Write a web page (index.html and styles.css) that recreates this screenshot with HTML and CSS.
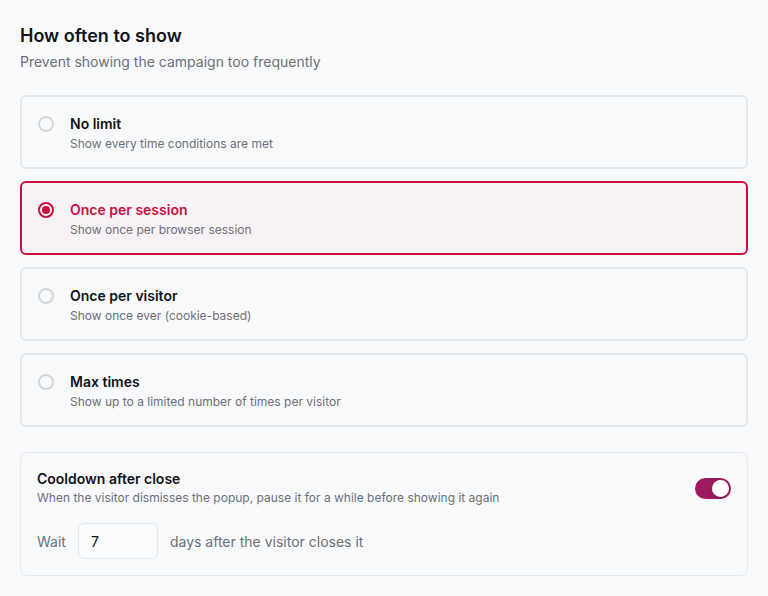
FILE: index.html
```html
<!DOCTYPE html>
<html>
<head>
	<meta charset="utf-8">
	<title>How often to show</title>
	<link rel="stylesheet" href="styles.css">
</head>
<body>
	<div class="panel">
		<h2 class="title">How often to show</h2>
		<p class="subtitle">Prevent showing the campaign too frequently</p>

		<div class="options">
			<label class="option">
				<span class="radio"></span>
				<span class="text">
					<span class="name">No limit</span>
					<span class="desc">Show every time conditions are met</span>
				</span>
			</label>
			<label class="option selected">
				<span class="radio"></span>
				<span class="text">
					<span class="name">Once per session</span>
					<span class="desc">Show once per browser session</span>
				</span>
			</label>
			<label class="option">
				<span class="radio"></span>
				<span class="text">
					<span class="name">Once per visitor</span>
					<span class="desc">Show once ever (cookie-based)</span>
				</span>
			</label>
			<label class="option">
				<span class="radio"></span>
				<span class="text">
					<span class="name">Max times</span>
					<span class="desc">Show up to a limited number of times per visitor</span>
				</span>
			</label>
		</div>

		<div class="cooldown">
			<div class="cooldown-head">
				<div>
					<div class="name">Cooldown after close</div>
					<div class="desc">When the visitor dismisses the popup, pause it for a while before showing it again</div>
				</div>
				<span class="toggle on"><span class="knob"></span></span>
			</div>
			<div class="wait">
				<span>Wait</span>
				<input type="text" value="7">
				<span>days after the visitor closes it</span>
			</div>
		</div>
	</div>
</body>
</html>
```

FILE: styles.css
```css
html, body{
	margin:0;
	background:#f8f9fb;
}
body{
	font-family:Inter, "Liberation Sans", sans-serif;
	color:#111318;
}
.panel{
	padding:24px 20px 20px;
}
.title{
	margin:0;
	font-size:18px;
	font-weight:600;
	line-height:24px;
}
.subtitle{
	margin:5px 0 0;
	font-size:14px;
	line-height:18px;
	color:#6b7079;
}
.options{
	margin-top:24px;
	display:flex;
	flex-direction:column;
	gap:12px;
}
.option{
	display:flex;
	align-items:flex-start;
	gap:16px;
	height:74px;
	box-sizing:border-box;
	padding:17px 16px 0 16px;
	border:2px solid #e3e8ef;
	border-radius:6px;
	background:#f8f9fb;
	cursor:pointer;
}
.radio{
	width:16px;
	height:16px;
	box-sizing:border-box;
	margin-top:2px;
	border:2px solid #cfd8e3;
	border-radius:50%;
	flex:none;
	position:relative;
}
.text{
	display:flex;
	flex-direction:column;
}
.name{
	font-size:14px;
	font-weight:600;
	line-height:20px;
	color:#111318;
}
.desc{
	font-size:12px;
	line-height:18px;
	color:#6b7079;
	margin-top:1px;
}
.selected{
	border-color:#c8113f;
	background:#f8f2f6;
}
.selected .radio{
	border-color:#c8113f;
}
.selected .radio::after{
	content:"";
	position:absolute;
	left:2px;
	top:2px;
	width:8px;
	height:8px;
	border-radius:50%;
	background:#c8113f;
}
.selected .name{
	color:#c8113f;
}
.cooldown{
	margin-top:25px;
	border:1px solid #e3e8ef;
	border-radius:8px;
	padding:16px 16px 16px;
}
.cooldown-head{
	display:flex;
	justify-content:space-between;
	align-items:flex-start;
}
.cooldown-head .desc{
	margin-top:0;
}
.toggle{
	width:36px;
	height:21px;
	border-radius:11px;
	background:#9c1b5e;
	flex:none;
	margin-top:9px;
	position:relative;
}
.knob{
	position:absolute;
	right:2px;
	top:2px;
	width:17px;
	height:17px;
	border-radius:50%;
	background:#fff;
	box-shadow:0 2px 4px rgba(0,0,0,0.12);
}
.wait{
	margin-top:16px;
	display:flex;
	align-items:center;
	gap:12px;
	font-size:14px;
	color:#6b7079;
}
.wait input{
	width:80px;
	height:36px;
	box-sizing:border-box;
	border:1px solid #e3e8ef;
	border-radius:6px;
	background:#fafbfc;
	padding:0 12px;
	font-family:inherit;
	font-size:14px;
	color:#111318;
}
```
